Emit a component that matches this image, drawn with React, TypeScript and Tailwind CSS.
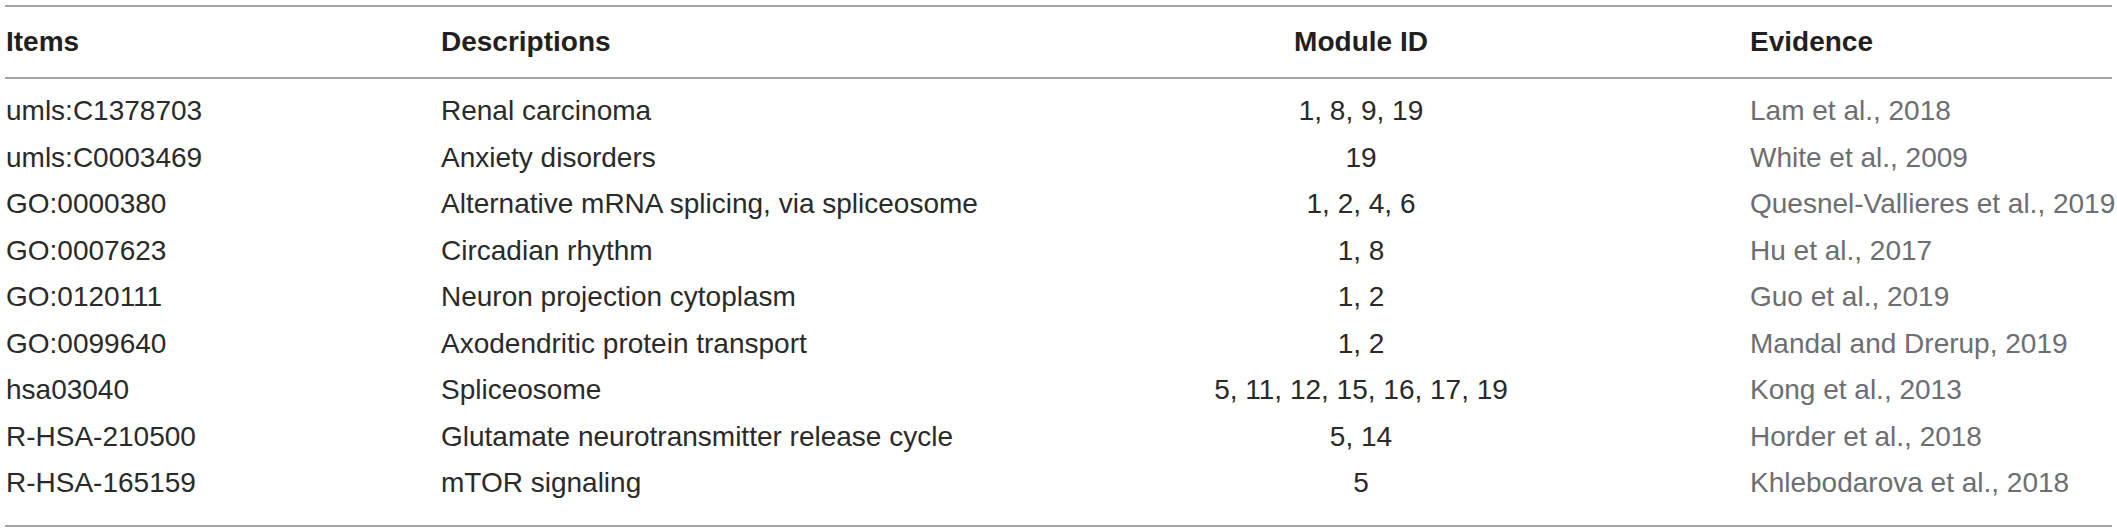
import React from 'react'

type Row = { item: string; desc: string; modules: string; evidence: string }

const rows: Row[] = [
  { item: 'umls:C1378703', desc: 'Renal carcinoma', modules: '1, 8, 9, 19', evidence: 'Lam et al., 2018' },
  { item: 'umls:C0003469', desc: 'Anxiety disorders', modules: '19', evidence: 'White et al., 2009' },
  { item: 'GO:0000380', desc: 'Alternative mRNA splicing, via spliceosome', modules: '1, 2, 4, 6', evidence: 'Quesnel-Vallieres et al., 2019' },
  { item: 'GO:0007623', desc: 'Circadian rhythm', modules: '1, 8', evidence: 'Hu et al., 2017' },
  { item: 'GO:0120111', desc: 'Neuron projection cytoplasm', modules: '1, 2', evidence: 'Guo et al., 2019' },
  { item: 'GO:0099640', desc: 'Axodendritic protein transport', modules: '1, 2', evidence: 'Mandal and Drerup, 2019' },
  { item: 'hsa03040', desc: 'Spliceosome', modules: '5, 11, 12, 15, 16, 17, 19', evidence: 'Kong et al., 2013' },
  { item: 'R-HSA-210500', desc: 'Glutamate neurotransmitter release cycle', modules: '5, 14', evidence: 'Horder et al., 2018' },
  { item: 'R-HSA-165159', desc: 'mTOR signaling', modules: '5', evidence: 'Khlebodarova et al., 2018' },
]

const cols = 'grid grid-cols-[436px_559px_722px_1fr] items-center whitespace-nowrap'

export default function App() {
  return (
    <div className="w-[2117px] h-[532px] bg-white pt-[5px] pl-[5px] font-['Liberation_Sans',Arial,sans-serif] text-[28px] leading-none">
      <div className="w-[2107px]">
        <div className="h-[2px] bg-[#a3a3a3]" />
        <div className={cols + ' h-[70px] font-bold text-[#231f20]'}>
          <div className="pl-px">Items</div>
          <div>Descriptions</div>
          <div className="text-center">Module ID</div>
          <div className="pl-[28px]">Evidence</div>
        </div>
        <div className="h-[2px] bg-[#a3a3a3]" />
        <div className="pt-[9px] pb-[18px]">
          {rows.map(r => (
            <div key={r.item} className={cols + ' h-[46.5px] text-[#2a2a2a]'}>
              <div className="pl-px">{r.item}</div>
              <div>{r.desc}</div>
              <div className="text-center">{r.modules}</div>
              <div className="pl-[28px] text-[#6d6e71]">{r.evidence}</div>
            </div>
          ))}
        </div>
        <div className="h-[2px] bg-[#a3a3a3]" />
      </div>
    </div>
  )
}
